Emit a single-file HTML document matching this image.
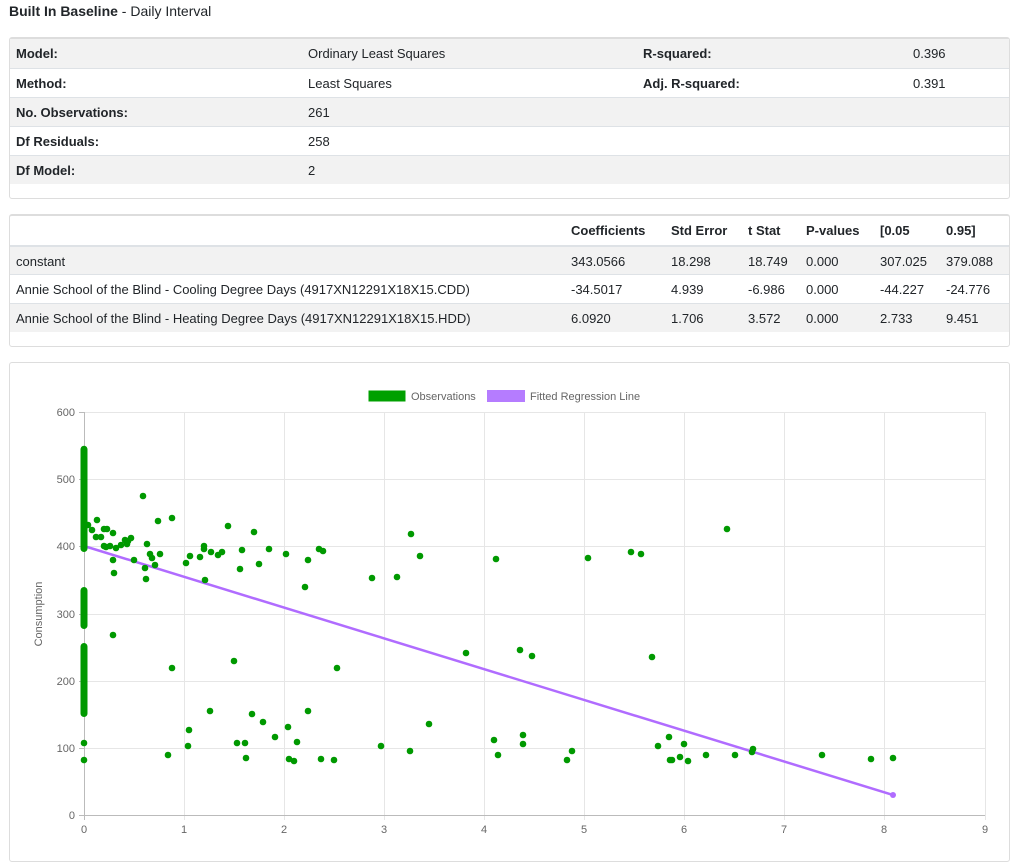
<!DOCTYPE html>
<html><head><meta charset="utf-8"><style>
body{margin:0;width:1018px;height:843px;overflow:hidden;background:#fff;font-family:"Liberation Sans",sans-serif;color:#212529;font-size:13px}
.title{position:absolute;left:9px;top:3px;font-size:14px}
.card{position:absolute;left:9px;width:1001px;border:1px solid #ddd;border-radius:3px;background:#fff;box-sizing:border-box}
.row{position:absolute;left:0;right:0;height:29px;border-top:1px solid #dee2e6;box-sizing:border-box}
.g{background:#f2f2f2}
.c{position:absolute;top:7px;white-space:nowrap}
b{font-weight:bold}
</style></head><body>
<div class="title"><b>Built In Baseline</b> - Daily Interval</div>

<div class="card" style="top:37px;height:162px;border-top:2px solid #ddd">
 <div class="row g" style="top:0;border-top:none"><span class="c" style="left:6px"><b>Model:</b></span><span class="c" style="left:298px">Ordinary Least Squares</span><span class="c" style="left:633px"><b>R-squared:</b></span><span class="c" style="left:903px">0.396</span></div>
 <div class="row" style="top:29px"><span class="c" style="left:6px"><b>Method:</b></span><span class="c" style="left:298px">Least Squares</span><span class="c" style="left:633px"><b>Adj. R-squared:</b></span><span class="c" style="left:903px">0.391</span></div>
 <div class="row g" style="top:58px"><span class="c" style="left:6px"><b>No. Observations:</b></span><span class="c" style="left:298px">261</span></div>
 <div class="row" style="top:87px"><span class="c" style="left:6px"><b>Df Residuals:</b></span><span class="c" style="left:298px">258</span></div>
 <div class="row g" style="top:116px"><span class="c" style="left:6px"><b>Df Model:</b></span><span class="c" style="left:298px">2</span></div>
</div>

<div class="card" style="top:214px;height:133px;border-top:2px solid #ddd">
 <div class="row" style="top:0;border-top:none;height:29px"><span class="c" style="left:561px"><b>Coefficients</b></span><span class="c" style="left:661px"><b>Std Error</b></span><span class="c" style="left:738px"><b>t Stat</b></span><span class="c" style="left:796px"><b>P-values</b></span><span class="c" style="left:870px"><b>[0.05</b></span><span class="c" style="left:936px"><b>0.95]</b></span></div>
 <div class="row g" style="top:29px;border-top:2px solid #dee2e6"><span class="c" style="left:6px">constant</span><span class="c" style="left:561px">343.0566</span><span class="c" style="left:661px">18.298</span><span class="c" style="left:738px">18.749</span><span class="c" style="left:796px">0.000</span><span class="c" style="left:870px">307.025</span><span class="c" style="left:936px">379.088</span></div>
 <div class="row" style="top:58px"><span class="c" style="left:6px">Annie School of the Blind - Cooling Degree Days (4917XN12291X18X15.CDD)</span><span class="c" style="left:561px">-34.5017</span><span class="c" style="left:661px">4.939</span><span class="c" style="left:738px">-6.986</span><span class="c" style="left:796px">0.000</span><span class="c" style="left:870px">-44.227</span><span class="c" style="left:936px">-24.776</span></div>
 <div class="row g" style="top:87px"><span class="c" style="left:6px">Annie School of the Blind - Heating Degree Days (4917XN12291X18X15.HDD)</span><span class="c" style="left:561px">6.0920</span><span class="c" style="left:661px">1.706</span><span class="c" style="left:738px">3.572</span><span class="c" style="left:796px">0.000</span><span class="c" style="left:870px">2.733</span><span class="c" style="left:936px">9.451</span></div>
</div>

<div class="card" style="top:362px;height:500px"></div>
<svg style="position:absolute;left:0;top:0" width="1018" height="843" font-family="Liberation Sans, sans-serif">
<g stroke="#e6e6e6" stroke-width="1">
<line x1="84" y1="412.5" x2="985" y2="412.5"/><line x1="84" y1="479.5" x2="985" y2="479.5"/><line x1="84" y1="546.5" x2="985" y2="546.5"/><line x1="84" y1="614.5" x2="985" y2="614.5"/><line x1="84" y1="681.5" x2="985" y2="681.5"/><line x1="84" y1="748.5" x2="985" y2="748.5"/>
<line x1="184.5" y1="412" x2="184.5" y2="820"/><line x1="284.5" y1="412" x2="284.5" y2="820"/><line x1="384.5" y1="412" x2="384.5" y2="820"/><line x1="484.5" y1="412" x2="484.5" y2="820"/><line x1="584.5" y1="412" x2="584.5" y2="820"/><line x1="684.5" y1="412" x2="684.5" y2="820"/><line x1="784.5" y1="412" x2="784.5" y2="820"/><line x1="884.5" y1="412" x2="884.5" y2="820"/><line x1="985.5" y1="412" x2="985.5" y2="820"/>
</g>
<g stroke="#bbb"><line x1="84.5" y1="412" x2="84.5" y2="820"/><line x1="79" y1="815.5" x2="985" y2="815.5"/>
<line x1="79" y1="412.5" x2="84" y2="412.5"/><line x1="79" y1="479.5" x2="84" y2="479.5"/><line x1="79" y1="546.5" x2="84" y2="546.5"/><line x1="79" y1="614.5" x2="84" y2="614.5"/><line x1="79" y1="681.5" x2="84" y2="681.5"/><line x1="79" y1="748.5" x2="84" y2="748.5"/></g>
<g font-size="11" fill="#666" text-anchor="end">
<text x="75" y="416">600</text><text x="75" y="483">500</text><text x="75" y="550">400</text><text x="75" y="618">300</text><text x="75" y="685">200</text><text x="75" y="752">100</text><text x="75" y="819">0</text></g>
<g font-size="11" fill="#666" text-anchor="middle">
<text x="84" y="833">0</text><text x="184" y="833">1</text><text x="284" y="833">2</text><text x="384" y="833">3</text><text x="484" y="833">4</text><text x="584" y="833">5</text><text x="684" y="833">6</text><text x="784" y="833">7</text><text x="884" y="833">8</text><text x="985" y="833">9</text></g>
<text x="42" y="614" font-size="11" fill="#666" text-anchor="middle" transform="rotate(-90 42 614)">Consumption</text>
<rect x="368" y="390" width="38" height="12" fill="#00a000" stroke="#fff"/><text x="411" y="400" font-size="11" fill="#666">Observations</text>
<rect x="487" y="390" width="38" height="12" fill="#b57cff"/><text x="530" y="400" font-size="11" fill="#666">Fitted Regression Line</text>
<line x1="84" y1="546" x2="893" y2="795" stroke="#b06cff" stroke-width="2.5"/>
<circle cx="893" cy="795" r="3" fill="#b06cff"/>
<g fill="#009900">
<rect x="80.5" y="446" width="7" height="106" rx="3.5"/>
<rect x="80.5" y="587" width="7" height="42" rx="3.5"/>
<rect x="80.5" y="643" width="7" height="74" rx="3.5"/>
<circle cx="84" cy="449" r="3.3"/><circle cx="84" cy="743" r="3.3"/><circle cx="84" cy="760" r="3.3"/>
<circle cx="88" cy="525" r="3.3"/><circle cx="92" cy="530" r="3.3"/><circle cx="97" cy="520" r="3.3"/><circle cx="96" cy="537" r="3.3"/><circle cx="104" cy="529" r="3.3"/><circle cx="107" cy="529" r="3.3"/><circle cx="101" cy="537" r="3.3"/><circle cx="104" cy="546" r="3.3"/><circle cx="110" cy="546" r="3.3"/><circle cx="113" cy="533" r="3.3"/><circle cx="106" cy="547" r="3.3"/><circle cx="121" cy="545" r="3.3"/><circle cx="125" cy="540" r="3.3"/><circle cx="128" cy="541" r="3.3"/><circle cx="131" cy="538" r="3.3"/><circle cx="116" cy="548" r="3.3"/><circle cx="127" cy="544" r="3.3"/><circle cx="113" cy="560" r="3.3"/><circle cx="114" cy="573" r="3.3"/><circle cx="134" cy="560" r="3.3"/><circle cx="143" cy="496" r="3.3"/><circle cx="147" cy="544" r="3.3"/><circle cx="150" cy="554" r="3.3"/><circle cx="152" cy="558" r="3.3"/><circle cx="145" cy="568" r="3.3"/><circle cx="146" cy="579" r="3.3"/><circle cx="158" cy="521" r="3.3"/><circle cx="160" cy="554" r="3.3"/><circle cx="172" cy="518" r="3.3"/><circle cx="155" cy="565" r="3.3"/><circle cx="186" cy="563" r="3.3"/><circle cx="190" cy="556" r="3.3"/><circle cx="200" cy="557" r="3.3"/><circle cx="204" cy="546" r="3.3"/><circle cx="204" cy="549" r="3.3"/><circle cx="211" cy="552" r="3.3"/><circle cx="218" cy="555" r="3.3"/><circle cx="222" cy="552" r="3.3"/><circle cx="205" cy="580" r="3.3"/><circle cx="228" cy="526" r="3.3"/><circle cx="240" cy="569" r="3.3"/><circle cx="242" cy="550" r="3.3"/><circle cx="254" cy="532" r="3.3"/><circle cx="259" cy="564" r="3.3"/><circle cx="269" cy="549" r="3.3"/><circle cx="286" cy="554" r="3.3"/><circle cx="305" cy="587" r="3.3"/><circle cx="308" cy="560" r="3.3"/><circle cx="319" cy="549" r="3.3"/><circle cx="323" cy="551" r="3.3"/><circle cx="372" cy="578" r="3.3"/><circle cx="397" cy="577" r="3.3"/><circle cx="411" cy="534" r="3.3"/><circle cx="420" cy="556" r="3.3"/><circle cx="496" cy="559" r="3.3"/><circle cx="588" cy="558" r="3.3"/><circle cx="631" cy="552" r="3.3"/><circle cx="641" cy="554" r="3.3"/><circle cx="727" cy="529" r="3.3"/>
<circle cx="113" cy="635" r="3.3"/><circle cx="172" cy="668" r="3.3"/><circle cx="234" cy="661" r="3.3"/><circle cx="210" cy="711" r="3.3"/><circle cx="189" cy="730" r="3.3"/><circle cx="188" cy="746" r="3.3"/><circle cx="168" cy="755" r="3.3"/><circle cx="237" cy="743" r="3.3"/><circle cx="245" cy="743" r="3.3"/><circle cx="246" cy="758" r="3.3"/><circle cx="252" cy="714" r="3.3"/><circle cx="263" cy="722" r="3.3"/><circle cx="275" cy="737" r="3.3"/><circle cx="288" cy="727" r="3.3"/><circle cx="289" cy="759" r="3.3"/><circle cx="294" cy="761" r="3.3"/><circle cx="297" cy="742" r="3.3"/><circle cx="308" cy="711" r="3.3"/><circle cx="321" cy="759" r="3.3"/><circle cx="334" cy="760" r="3.3"/><circle cx="337" cy="668" r="3.3"/><circle cx="381" cy="746" r="3.3"/><circle cx="410" cy="751" r="3.3"/><circle cx="429" cy="724" r="3.3"/><circle cx="466" cy="653" r="3.3"/><circle cx="494" cy="740" r="3.3"/><circle cx="498" cy="755" r="3.3"/><circle cx="520" cy="650" r="3.3"/><circle cx="523" cy="735" r="3.3"/><circle cx="523" cy="744" r="3.3"/><circle cx="532" cy="656" r="3.3"/><circle cx="567" cy="760" r="3.3"/><circle cx="572" cy="751" r="3.3"/><circle cx="652" cy="657" r="3.3"/><circle cx="658" cy="746" r="3.3"/><circle cx="669" cy="737" r="3.3"/><circle cx="670" cy="760" r="3.3"/><circle cx="672" cy="760" r="3.3"/><circle cx="680" cy="757" r="3.3"/><circle cx="684" cy="744" r="3.3"/><circle cx="688" cy="761" r="3.3"/><circle cx="706" cy="755" r="3.3"/><circle cx="735" cy="755" r="3.3"/><circle cx="752" cy="752" r="3.3"/><circle cx="753" cy="749" r="3.3"/><circle cx="822" cy="755" r="3.3"/><circle cx="871" cy="759" r="3.3"/><circle cx="893" cy="758" r="3.3"/>
</g>
</svg>
</body></html>
